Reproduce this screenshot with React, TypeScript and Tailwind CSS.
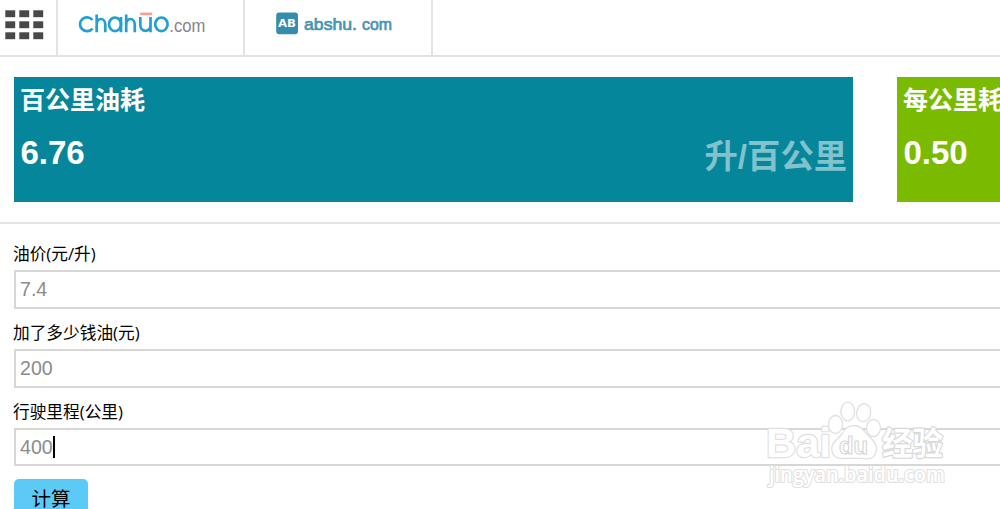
const results = [
  { title: "百公里油耗", value: "6.76", unit: "升/百公里", box: "bg-[#06869b]" },
  { title: "每公里耗", value: "0.50", unit: "", box: "bg-[#7aba00]" },
];

const fields = [
  { label: "油价(元/升)", value: "7.4", active: false, box: "h-[39px] mb-[14px]" },
  { label: "加了多少钱油(元)", value: "200", active: false, box: "h-[38.5px] mb-[14px]" },
  { label: "行驶里程(公里)", value: "400", active: true, box: "h-[38.5px] mb-[13px]" },
];

function GridIcon() {
  return (
    <svg width="39" height="30" viewBox="0 0 39 30" fill="#484848">
      {[0, 11, 22].map((y) =>
        [0, 14, 28].map((x) => <rect key={`${x}-${y}`} x={x + 0.3} y={y + 0.3} width="9.9" height="6.9" />)
      )}
    </svg>
  );
}

function ChahuoLogo() {
  return (
    <svg width="134" height="34" viewBox="0 0 134 34">
      <g fill="none" stroke="#229fd3" strokeWidth="2.7">
        <path d="M14.5 12A7 6.9 0 1 0 14.5 20.6" />
        <path d="M18.7 6.4V24.2M18.7 17c0-8 8.6-8 8.6 0v7.2" />
        <ellipse cx="37" cy="16.3" rx="6" ry="6.8" />
        <path d="M43 9V24.2M48.2 6.4V24.2M48.2 17c0-8 8.6-8 8.6 0v7.2" />
        <path d="M62.3 9v7.8c0 8 10.2 8 10.2 0V9M72.5 9v15.2" />
        <ellipse cx="83.4" cy="16.3" rx="6.2" ry="6.8" />
      </g>
      <rect x="62.2" y="4.6" width="12" height="2.6" fill="#fb9e87" />
      <text x="91.3" y="23.7" textLength="36" lengthAdjust="spacingAndGlyphs" fontSize="19" fill="#858585" fontFamily="Liberation Sans, sans-serif">.com</text>
    </svg>
  );
}

function AbshuLogo() {
  return (
    <svg width="120" height="26" viewBox="0 0 120 26">
      <rect x="0.2" y="0.4" width="21.8" height="21.8" rx="3" fill="#348dac" />
      <text x="2" y="15" textLength="18" lengthAdjust="spacingAndGlyphs" fontSize="11" fontWeight="700" fill="#fff" fontFamily="DejaVu Sans, sans-serif">AB</text>
      <g fill="#4696b2" stroke="#4696b2" strokeWidth="0.7" fontSize="17" fontFamily="Liberation Sans, sans-serif">
        <text x="28" y="18" textLength="53" lengthAdjust="spacingAndGlyphs">abshu.</text>
        <text x="86" y="18" textLength="30" lengthAdjust="spacingAndGlyphs">com</text>
      </g>
    </svg>
  );
}

function Watermark() {
  return (
    <svg className="absolute left-[760px] top-[396px]" width="190" height="98" viewBox="0 0 190 98" fill="#fff" stroke="#e0e0e0" strokeWidth="1.3" strokeLinejoin="round">
      <text x="6" y="61" fontSize="41" fontWeight="700" fontFamily="Liberation Sans, sans-serif" textLength="65" lengthAdjust="spacingAndGlyphs" paintOrder="stroke" strokeWidth="2.4">Bai</text>
      <text x="122" y="59" fontSize="32" fontWeight="700" fontFamily="Noto Sans CJK SC, sans-serif" textLength="61" lengthAdjust="spacingAndGlyphs" paintOrder="stroke" strokeWidth="2.4" stroke="#d8d8d8">经验</text>
      <text x="9" y="85.5" fontSize="21" fontWeight="600" fontFamily="Open Sans, sans-serif" textLength="176" lengthAdjust="spacingAndGlyphs" paintOrder="stroke" strokeWidth="2.2">jingyan.baidu.com</text>
      <ellipse cx="75.5" cy="28.5" rx="7" ry="9" />
      <ellipse cx="87.7" cy="15.5" rx="6.8" ry="9.3" />
      <ellipse cx="103.7" cy="16.7" rx="7" ry="9" transform="rotate(10 103.7 16.7)" />
      <ellipse cx="113.5" cy="32" rx="7" ry="8.5" />
      <path d="M94 29.5C87 29.5 84 35 81 39C77 44 71 47 71.8 54C72.5 61 78 63 84 62.5C91 62 98 62 105 62.7C112 63.5 116 60 116.5 53C117 46 110 42 106 37C103 33 100 29.5 94 29.5Z" />
      <text x="79" y="57.5" fontSize="24" fontWeight="700" fontFamily="Liberation Sans, sans-serif" textLength="29" lengthAdjust="spacingAndGlyphs" strokeWidth="1.1" stroke="#d5d5d5">du</text>
    </svg>
  );
}

export default function App() {
  return (
    <div className="relative h-[509px] w-[1000px] overflow-hidden bg-white font-['Liberation_Sans','Noto_Sans_CJK_SC',sans-serif] text-black">
      <header className="flex h-[57px] border-b-2 border-[#e2e3e7]">
        <div className="w-[58px] border-r-2 border-[#e2e3e7] pl-[5px] pt-[10px]"><GridIcon /></div>
        <div className="w-[187px] border-r-2 border-[#e2e3e7] pl-5 pt-2"><ChahuoLogo /></div>
        <div className="w-[188px] border-r-2 border-[#e2e3e7] pl-[31px] pt-3"><AbshuLogo /></div>
      </header>
      <section className="flex h-[167px] gap-11 border-b-2 border-[#e1e5e5] pl-[14px] pt-5">
        {results.map((item) => (
          <div key={item.title} className={`h-[125px] w-[839px] shrink-0 px-[6px] pt-[7px] font-bold text-white ${item.box}`}>
            <h2 className="h-[50px] text-[25px] leading-8">{item.title}</h2>
            <div className="flex justify-between">
              <span className="pl-[0.5px] text-[33px] leading-[38px]">{item.value}</span>
              <span className="text-[33.3px] leading-[45px] text-white/50">{item.unit}</span>
            </div>
          </div>
        ))}
      </section>
      <main className="w-[1720px] pl-[14px] pt-[20px]">
        {fields.map((field) => (
          <div key={field.label}>
            <label className="-ml-px block h-[26px] whitespace-nowrap font-['Open_Sans','Noto_Sans_CJK_SC',sans-serif] text-[16.7px] leading-[20px]">{field.label}</label>
            <div className={`flex items-center border-2 border-[#d7d7d7] pl-1 text-[19.6px] text-[#8b8b8b] ${field.box}`}>
              <span className="pt-px">{field.value}</span>
              {field.active && <span className="h-[22px] w-[2px] bg-black" />}
            </div>
          </div>
        ))}
        <button className="block h-10 w-[74px] rounded-[5px] bg-[#5bcaf5] text-[19.5px] leading-10">计算</button>
      </main>
      <Watermark />
    </div>
  );
}
